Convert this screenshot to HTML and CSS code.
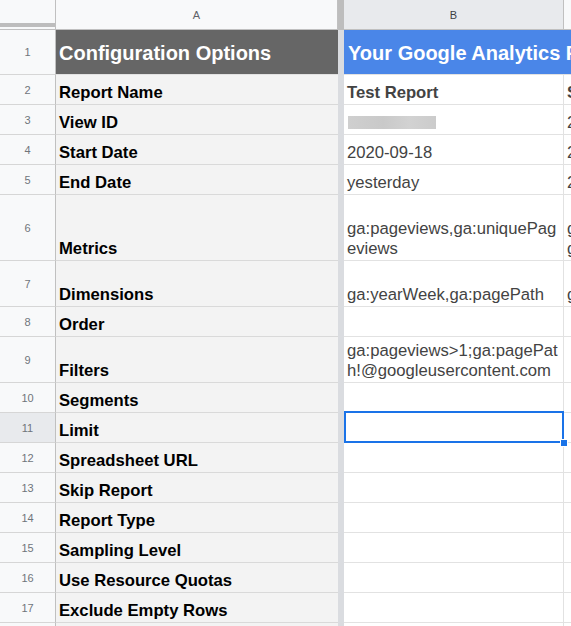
FILE: index.html
```html
<!DOCTYPE html>
<html lang="en">
<head>
<meta charset="utf-8">
<title>Configuration Options</title>
<link rel="stylesheet" href="styles.css">
</head>
<body>
<div class="sheet">
  <div class="corner"></div>
  <div class="colhead">A</div>
  <div class="freeze-head"></div>
  <div class="colhead sel">B</div>
  <div class="colhead">C</div>
  <div class="freeze-body"></div>

  <div class="rownum">1</div>
  <div class="title dark">Configuration Options</div>
  <div class="title blue">Your Google Analytics Report Configuration</div>

  <div class="rownum">2</div>
  <div class="lbl">Report Name</div>
  <div class="val strong">Test Report</div>
  <div class="val strong">Second Report</div>

  <div class="rownum">3</div>
  <div class="lbl">View ID</div>
  <div class="val"><span class="redacted"></span></div>
  <div class="val">222222222</div>

  <div class="rownum">4</div>
  <div class="lbl">Start Date</div>
  <div class="val">2020-09-18</div>
  <div class="val">2020-09-18</div>

  <div class="rownum">5</div>
  <div class="lbl">End Date</div>
  <div class="val">yesterday</div>
  <div class="val">2020-09-30</div>

  <div class="rownum">6</div>
  <div class="lbl">Metrics</div>
  <div class="val">ga:pageviews,ga:uniquePageviews</div>
  <div class="val words">ga:sessions,ga:users ga:newUsers,ga:bounces</div>

  <div class="rownum">7</div>
  <div class="lbl">Dimensions</div>
  <div class="val">ga:yearWeek,ga:pagePath</div>
  <div class="val">ga:date,ga:pagePath</div>

  <div class="rownum">8</div>
  <div class="lbl">Order</div>
  <div class="val"></div>
  <div class="val"></div>

  <div class="rownum">9</div>
  <div class="lbl">Filters</div>
  <div class="val">ga:pageviews&gt;1;ga:pagePath!@googleusercontent.com</div>
  <div class="val"></div>

  <div class="rownum">10</div>
  <div class="lbl">Segments</div>
  <div class="val"></div>
  <div class="val"></div>

  <div class="rownum sel">11</div>
  <div class="lbl">Limit</div>
  <div class="val active"></div>
  <div class="val"></div>

  <div class="rownum">12</div>
  <div class="lbl">Spreadsheet URL</div>
  <div class="val"></div>
  <div class="val"></div>

  <div class="rownum">13</div>
  <div class="lbl">Skip Report</div>
  <div class="val"></div>
  <div class="val"></div>

  <div class="rownum">14</div>
  <div class="lbl">Report Type</div>
  <div class="val"></div>
  <div class="val"></div>

  <div class="rownum">15</div>
  <div class="lbl">Sampling Level</div>
  <div class="val"></div>
  <div class="val"></div>

  <div class="rownum">16</div>
  <div class="lbl">Use Resource Quotas</div>
  <div class="val"></div>
  <div class="val"></div>

  <div class="rownum">17</div>
  <div class="lbl">Exclude Empty Rows</div>
  <div class="val"></div>
  <div class="val"></div>

  <div class="rownum">18</div>
  <div class="lbl"></div>
  <div class="val"></div>
  <div class="val"></div>
</div>
</body>
</html>
```

FILE: styles.css
```css
html, body {
  margin: 0;
  padding: 0;
  background: #ffffff;
}

body {
  width: 571px;
  height: 626px;
  overflow: hidden;
  font-family: "Liberation Sans", Arial, sans-serif;
}

.sheet {
  display: grid;
  grid-template-columns: 56px 282px 6px 220px 220px;
  grid-template-rows: 30px 45px repeat(4, 30px) 66px 46px 30px 46px repeat(9, 30px);
  width: 784px;
}

/* headers */
.corner {
  background:
    linear-gradient(to bottom, transparent 23px, #bdbdbd 23px, #bdbdbd 27px, transparent 27px),
    #f8f9fa;
  border-right: 1px solid #c0c0c0;
  border-bottom: 1px solid #c0c0c0;
}

.colhead {
  background: #f8f9fa;
  border-right: 1px solid #c0c0c0;
  border-bottom: 1px solid #c0c0c0;
  color: #5f6368;
  font-size: 11px;
  display: flex;
  align-items: center;
  justify-content: center;
}

.colhead.sel {
  background: #e8eaed;
  color: #3c4043;
}

.freeze-head {
  background: #bdbdbd;
}

.freeze-body {
  grid-column: 3;
  grid-row: 2 / span 18;
  background: #dadce0;
}

.rownum {
  background: #f8f9fa;
  border-right: 1px solid #c0c0c0;
  border-bottom: 1px solid #d6d6d6;
  color: #70757a;
  font-size: 11px;
  display: flex;
  align-items: center;
  justify-content: center;
}

.rownum.sel {
  background: #e8eaed;
}

/* cells */
.lbl,
.val,
.title {
  display: flex;
  align-items: flex-end;
  overflow: hidden;
  font-size: 16.67px;
  line-height: 20.5px;
  padding: 0 3px 0.5px 3px;
  border-bottom: 1px solid #e2e2e2;
}

.lbl {
  background: #f3f3f3;
  border-bottom-color: #d9d9d9;
  color: #000000;
  font-weight: bold;
}

.val {
  color: #434343;
  border-right: 1px solid #e2e2e2;
  word-break: break-all;
}

.val.words {
  word-break: normal;
  overflow-wrap: anywhere;
}

.val.strong {
  font-weight: bold;
}

.title {
  color: #ffffff;
  font-weight: bold;
  font-size: 20px;
  line-height: 23px;
  padding: 0 4px 9.5px 4px;
  white-space: nowrap;
}

.title.dark {
  background: #666666;
  padding-left: 3px;
}

.title.blue {
  grid-column: span 2;
  background: #4a86e8;
}

.redacted {
  display: inline-block;
  width: 88px;
  height: 13px;
  margin: 0 0 5px 1px;
  background: linear-gradient(to right, #cfcfcf, #c9c9c9 40%, #d2d2d2 70%, #cbcbcb);
}

/* active cell */
.val.active {
  position: relative;
  overflow: visible;
}

.val.active::before {
  content: "";
  position: absolute;
  top: -2px;
  left: 0;
  right: -1px;
  bottom: -1px;
  border: 2px solid #1a73e8;
}

.val.active::after {
  content: "";
  position: absolute;
  right: -5px;
  bottom: -5px;
  width: 6px;
  height: 6px;
  background: #1a73e8;
  border: 1px solid #ffffff;
}
```
